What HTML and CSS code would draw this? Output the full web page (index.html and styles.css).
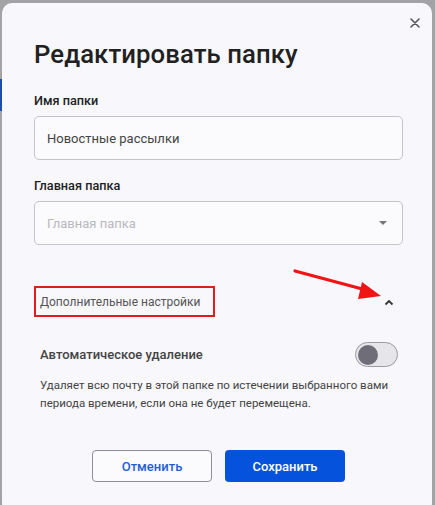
FILE: index.html
```html
<!DOCTYPE html>
<html lang="ru">
<head>
    <meta charset="UTF-8">
    <meta name="viewport" content="width=device-width, initial-scale=1.0">
    <title>Редактировать папку</title>
    <link rel="stylesheet" href="styles.css">
</head>
<body>

    <div class="page">
        <div class="side">
            <div class="side-mark"></div>
        </div>

        <div class="dialog">
            <button class="close" aria-label="Закрыть">
                <svg width="10" height="10" viewBox="0 0 10 10">
                    <path d="M1 1L9 9M9 1L1 9" stroke="#555" stroke-width="1.6" stroke-linecap="round"/>
                </svg>
            </button>

            <h1>Редактировать папку</h1>

            <label class="label">Имя папки</label>
            <div class="field">Новостные рассылки</div>

            <label class="label">Главная папка</label>
            <div class="field select">
                <span class="placeholder">Главная папка</span>
                <span class="caret"></span>
            </div>

            <div class="advanced">
                <span class="advanced-title">Дополнительные настройки</span>
                <svg class="chevron" width="10" height="7" viewBox="0 0 10 7">
                    <path d="M1.5 5.5L5 2L8.5 5.5" fill="none" stroke="#333" stroke-width="1.8"/>
                </svg>
                <svg class="arrow" width="100" height="40" viewBox="0 0 100 40">
                    <line x1="3" y1="3" x2="74" y2="22" stroke="#f01414" stroke-width="3.2" stroke-linecap="round"/>
                    <polygon points="89,28 70,14 66,31" fill="#f01414"/>
                </svg>
            </div>

            <div class="setting">
                <span class="setting-title">Автоматическое удаление</span>
                <span class="toggle"><span class="knob"></span></span>
            </div>
            <p class="hint">Удаляет всю почту в этой папке по истечении выбранного вами периода времени, если она не будет перемещена.</p>

            <div class="actions">
                <button class="btn btn-outline">Отменить</button>
                <button class="btn btn-primary">Сохранить</button>
            </div>
        </div>
    </div>

</body>
</html>
```

FILE: styles.css
```css
* {
    margin: 0;
    padding: 0;
    box-sizing: border-box;
    font-family: 'Roboto', 'Liberation Sans', sans-serif;
}

body {
    background: #a3a3a6;
    width: 435px;
    height: 505px;
    overflow: hidden;
}

.page {
    display: flex;
    padding-top: 3px;
}

.side {
    width: 2px;
    flex-shrink: 0;
}

.side-mark {
    margin-top: 76px;
    height: 32px;
    background: #1d4fa8;
}

.dialog {
    position: relative;
    width: 430px;
    height: 510px;
    background: #f8f7fc;
    border-radius: 10px;
    padding: 36px 29px 0 32px;
}

.close {
    position: absolute;
    top: 14px;
    right: 11px;
    width: 12px;
    height: 12px;
    border: none;
    background: none;
    display: flex;
    align-items: center;
    justify-content: center;
}

h1 {
    font-size: 25.7px;
    font-weight: 500;
    color: #212121;
    letter-spacing: 0.1px;
    margin-bottom: 24px;
}

.label {
    display: block;
    font-size: 12.7px;
    font-weight: 500;
    color: #222;
    margin-bottom: 8px;
}

.field {
    height: 44px;
    border: 1px solid #c4c4c8;
    border-radius: 5px;
    background: #fbfafd;
    padding: 0 12px;
    display: flex;
    align-items: center;
    font-size: 13px;
    color: #444;
    margin-bottom: 18px;
}

.select {
    justify-content: space-between;
}

.placeholder {
    color: #b8b8be;
}

.caret {
    width: 0;
    height: 0;
    border-left: 4px solid transparent;
    border-right: 4px solid transparent;
    border-top: 4px solid #777;
    margin-right: 3px;
}

.advanced {
    position: relative;
    display: flex;
    align-items: center;
    justify-content: space-between;
    margin-top: 41px;
    padding-right: 9px;
}

.advanced-title {
    border: 2px solid #e31b1b;
    padding: 6px 13px 6px 4px;
    font-size: 12px;
    color: #555;
    height: 31px;
    display: flex;
    align-items: center;
}

.chevron {
    margin-top: 2px;
}

.arrow {
    position: absolute;
    left: 258px;
    top: -18px;
}

.setting {
    display: flex;
    align-items: center;
    justify-content: space-between;
    margin-top: 25px;
    padding: 0 5px 0 6px;
}

.setting-title {
    font-size: 13px;
    font-weight: 500;
    color: #444;
}

.toggle {
    width: 43px;
    height: 25px;
    border: 1px solid #9a9aa0;
    border-radius: 13px;
    background: #e6e5ea;
    display: flex;
    align-items: center;
    padding-left: 2px;
}

.knob {
    width: 20px;
    height: 20px;
    border-radius: 50%;
    background: #6f6e78;
}

.hint {
    font-size: 11.5px;
    line-height: 18px;
    color: #444;
    margin-top: 9px;
    padding-left: 6px;
}

.actions {
    display: flex;
    justify-content: center;
    gap: 13px;
    margin-top: 38px;
}

.btn {
    width: 120px;
    height: 32px;
    border-radius: 4px;
    font-size: 13px;
    font-weight: 500;
    cursor: pointer;
}

.btn-outline {
    background: #fbfafd;
    border: 1px solid #8e8e94;
    color: #1f5fd6;
}

.btn-primary {
    background: #0552dc;
    border: none;
    color: #fff;
}
```
